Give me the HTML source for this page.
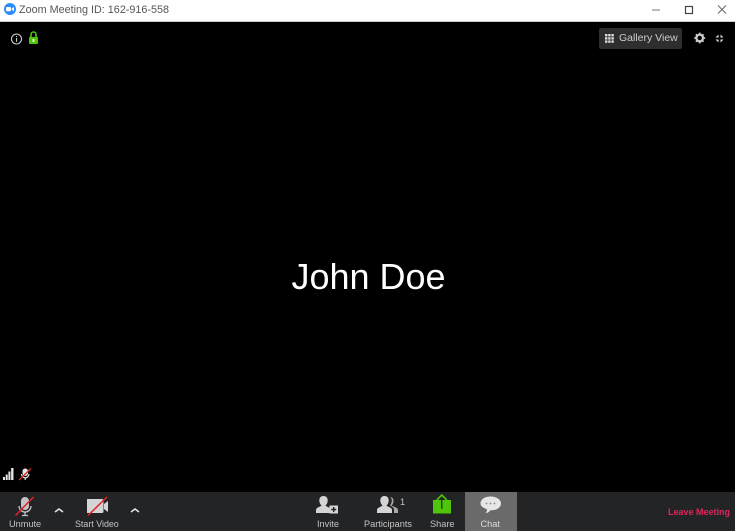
<!DOCTYPE html>
<html><head><meta charset="utf-8"><style>
html,body{margin:0;padding:0;width:735px;height:531px;overflow:hidden;background:#000;font-family:"Liberation Sans",sans-serif}
div{position:absolute}
.l{font-size:9.2px;color:#c4c4c4;top:519px;white-space:nowrap;line-height:11px}
svg{position:absolute;overflow:visible}
</style></head><body>
<div style="left:0;top:0;width:735px;height:21px;background:#fff"></div>
<div style="left:0;top:21px;width:735px;height:1px;background:#ccc"></div>
<svg style="left:0;top:0" width="735" height="22">
<circle cx="10" cy="9" r="6" fill="#2d8cff"/><rect x="6" y="7" width="5" height="4.200" rx="1" fill="#fff"/><path d="M11.500 8.800l2.500-1.800v4.200l-2.500-1.800z" fill="#fff"/>
<rect x="652" y="9.500" width="8" height="1" fill="#777"/>
<rect x="685.500" y="6.500" width="7" height="7" fill="none" stroke="#444" stroke-width="1.200"/>
<path d="M718 5.500l8 8M726 5.500l-8 8" stroke="#666" stroke-width="1"/>
</svg>
<div style="left:19px;top:4px;font-size:10.800px;line-height:13px;color:#555;white-space:nowrap">Zoom Meeting ID: 162-916-558</div>
<svg style="left:0;top:22px" width="735" height="30">
<circle cx="16.500" cy="17" r="5" fill="none" stroke="#ccc" stroke-width="1.100"/><rect x="16" y="16" width="1.100" height="3.800" fill="#ccc"/><rect x="16" y="14" width="1.100" height="1.100" fill="#ccc"/>
<path d="M31 15v-2.500a2.500 2.500 0 0 1 5 0V15" fill="none" stroke="#4fc40a" stroke-width="1.600"/><rect x="29" y="15" width="9" height="7" rx="1" fill="#4fc40a"/><rect x="32.500" y="17" width="2" height="3" fill="#dff5d0"/>
</svg>
<div style="left:599px;top:28px;width:83px;height:21px;background:#2e2e2e;border-radius:2px"></div>
<svg style="left:605px;top:34px" width="9" height="9"><g fill="#ddd"><rect x="0" y="0" width="2.400" height="2.400"/><rect x="3.200" y="0" width="2.400" height="2.400"/><rect x="6.400" y="0" width="2.400" height="2.400"/><rect x="0" y="3.200" width="2.400" height="2.400"/><rect x="3.200" y="3.200" width="2.400" height="2.400"/><rect x="6.400" y="3.200" width="2.400" height="2.400"/><rect x="0" y="6.400" width="2.400" height="2.400"/><rect x="3.200" y="6.400" width="2.400" height="2.400"/><rect x="6.400" y="6.400" width="2.400" height="2.400"/></g></svg>
<div style="left:619px;top:32px;font-size:10.500px;line-height:13px;color:#ccc;white-space:nowrap">Gallery View</div>
<svg style="left:694px;top:32px" width="12" height="12"><circle cx="5.700" cy="6" r="3.300" fill="none" stroke="#ccc" stroke-width="2.200"/><path d="M5.700 .6v2M5.700 9.400v2M.3 6h2M9.100 6h2M1.900 2.200l1.400 1.400M8.100 8.400l1.400 1.400M1.900 9.800l1.400-1.400M8.100 3.600l1.400-1.400" stroke="#ccc" stroke-width="1.800"/></svg>
<svg style="left:715px;top:34px" width="9" height="9"><path d="M3.500 .5v3h-3zM5.500 .5v3h3zM3.500 8.500v-3h-3zM5.500 8.500v-3h3z" fill="#ddd"/></svg>
<div style="left:0;top:257px;width:735px;text-align:center;font-size:36px;line-height:40px;color:#fff;padding-left:1px">John Doe</div>
<svg style="left:0;top:465px" width="40" height="20">
<g fill="#e4e4e4"><rect x="3" y="12" width="2" height="3"/><rect x="5.700" y="9.500" width="2" height="5.500"/><rect x="8.400" y="6.500" width="2" height="8.500"/><rect x="11.100" y="3" width="2.400" height="12"/></g>
<rect x="22.500" y="3.500" width="5.500" height="7.500" rx="2.700" fill="#e4e4e4"/><path d="M21.500 9a3.700 3.700 0 0 0 7.500 0M25.200 13v2" stroke="#e4e4e4" fill="none" stroke-width="1.200"/><path d="M19 15L31 3.500" stroke="#e02a2a" stroke-width="1.300"/>
</svg>
<div style="left:0;top:492px;width:735px;height:39px;background:#232426"></div>
<div style="left:465px;top:492px;width:52px;height:39px;background:#6a6a6a"></div>
<svg style="left:0;top:492px" width="735" height="39">
<rect x="21" y="5" width="8" height="13" rx="4" fill="#c4c4c4"/><path d="M19 14a6 6 0 0 0 12 0M25 20v3M22 23.500h6" stroke="#c4c4c4" fill="none" stroke-width="1.300"/><path d="M15.500 23.500L33.500 5" stroke="#e2222e" stroke-width="1.500"/>
<path d="M55 20l4-3 4 3" fill="none" stroke="#e0e0e0" stroke-width="1.600"/>
<path d="M87 7h15a1.500 1.500 0 0 1 1.500 1.500v11a1.500 1.500 0 0 1-1.500 1.500H87z" fill="#d4d4d4"/><path d="M104 12l4-3v11l-4-3z" fill="#d4d4d4"/><path d="M88 23.500L107 5" stroke="#e2222e" stroke-width="1.500"/>
<path d="M131 20l4-3 4 3" fill="none" stroke="#e0e0e0" stroke-width="1.600"/>
<path d="M316 21v-3c0-2.500 4-3 5.500-4.500-1.500-1.500-2.200-3-2.200-5 0-3 1.800-4.500 4.200-4.500s4.200 1.500 4.200 4.500c0 2-.7 3.500-2.200 5 1 1 2.500 1.500 4 2.200V21z" fill="#d4d4d4"/><rect x="329.500" y="13.500" width="8.500" height="8" fill="#d4d4d4"/><path d="M333.700 15v5M331.200 17.500h5" stroke="#232426" stroke-width="1.400"/>
<path d="M377 21v-3c0-2.500 4-3 5.500-4.500-1.500-1.500-2.200-3-2.200-5 0-3 1.800-4.500 4.200-4.500s4.200 1.500 4.200 4.500c0 2-.7 3.500-2.200 5 1.500 1.500 5.500 2 5.500 4.500v3z" fill="#d4d4d4"/><path d="M390 5c2.200.2 3.500 1.400 3.500 3.700 0 2-.5 3.300-1.800 4.800 1.500 1.200 6.300 1.800 6.300 4.500v3h-4v-3.500c0-2-2.500-3-4-4.200 1-1.500 1.800-2.800 1.800-4.800 0-1.400-.6-2.600-1.800-3.500z" fill="#a8a8a8"/>
<rect x="433" y="8" width="18" height="13.500" fill="#4fc40a"/><path d="M441.800 17V5" stroke="#1c3a08" stroke-width="1.300"/><path d="M436.800 8l5-5 5 5" fill="none" stroke="#4fc40a" stroke-width="1.600"/>
<path d="M490.500 4.500c5.800 0 10.500 3 10.500 7 0 4-4.500 6.800-9.500 6.800l-1 0c-1 1.500-3 2.700-5 3 1-1 1.500-2.500 1.500-4-3-1.200-6.500-2.800-6.500-5.800 0-4 4.200-7 10-7z" fill="#e6e6e6"/><g fill="#888"><circle cx="486.500" cy="11.500" r=".9"/><circle cx="490.500" cy="11.500" r=".9"/><circle cx="494.500" cy="11.500" r=".9"/></g>
</svg>
<div class="l" style="left:9px">Unmute</div>
<div class="l" style="left:75px;font-size:8.900px">Start Video</div>
<div class="l" style="left:317px">Invite</div>
<div class="l" style="left:364px">Participants</div>
<div class="l" style="left:400px;top:497px">1</div>
<div class="l" style="left:430px">Share</div>
<div class="l" style="left:480.500px;color:#ddd">Chat</div>
<div style="left:668px;top:507px;font-size:9px;line-height:11px;font-weight:bold;color:#e0245e;white-space:nowrap">Leave Meeting</div>
</body></html>
